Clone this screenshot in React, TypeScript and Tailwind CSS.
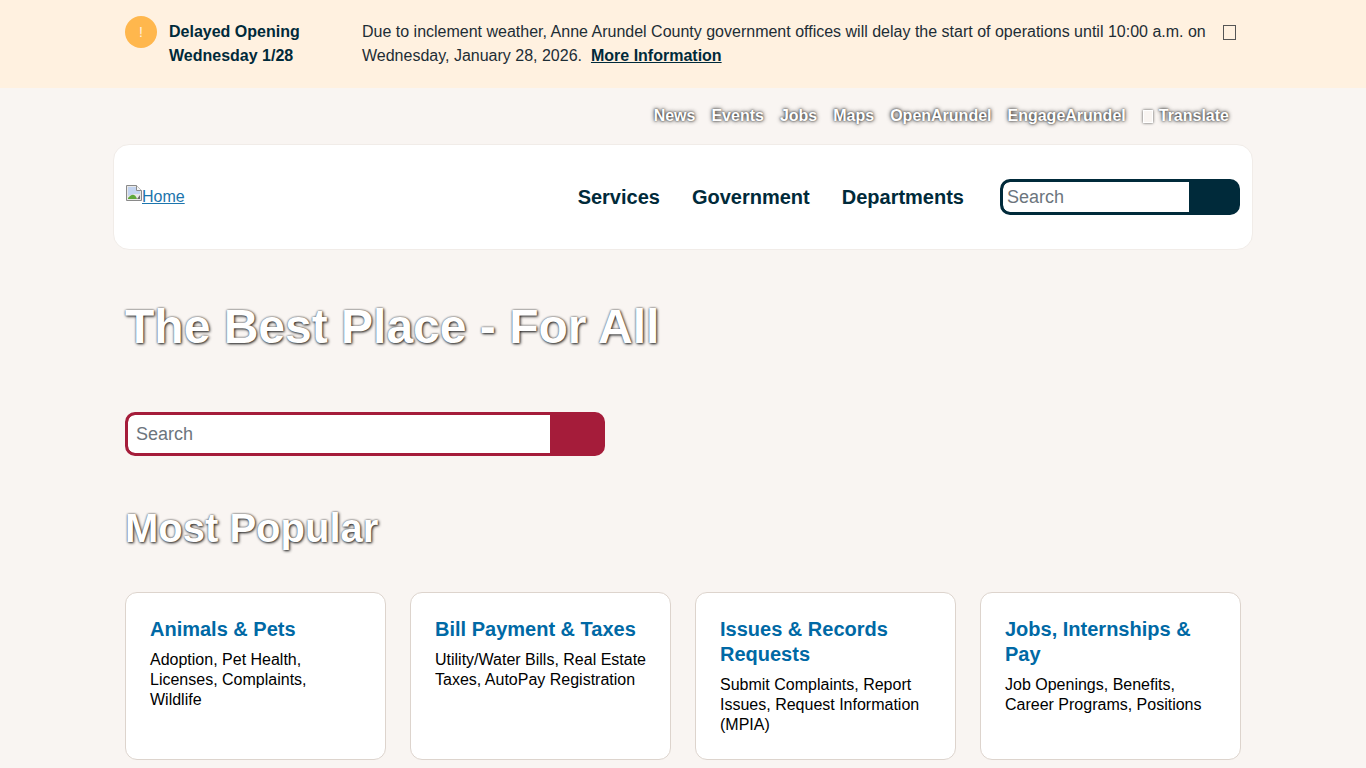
const topLinks = ["News", "Events", "Jobs", "Maps", "OpenArundel", "EngageArundel"];

const cards = [
  {
    title: "Animals & Pets",
    text: "Adoption, Pet Health, Licenses, Complaints, Wildlife",
  },
  {
    title: "Bill Payment & Taxes",
    text: "Utility/Water Bills, Real Estate Taxes, AutoPay Registration",
  },
  {
    title: "Issues & Records Requests",
    text: "Submit Complaints, Report Issues, Request Information (MPIA)",
  },
  {
    title: "Jobs, Internships & Pay",
    text: "Job Openings, Benefits, Career Programs, Positions",
  },
];

function BrokenImage() {
  return (
    <svg width="16" height="16" viewBox="0 0 16 16" className="mt-[1px] shrink-0">
      <path d="M0.5 0.5H10.5L15.5 5.5V15.5H0.5Z" fill="#e8e8e8" stroke="#8a8a8a" />
      <path d="M2 2H10V6H14V9L8 9L2 11Z" fill="#c3d4f0" />
      <path d="M2 14V13C5 9 9 8 11 14Z" fill="#5fa83a" />
      <path d="M11 14L14 10V14Z" fill="#6b6b6b" />
      <path d="M10.5 0.5V5.5H15.5" fill="#f5f5f5" stroke="#8a8a8a" />
    </svg>
  );
}

export default function App() {
  return (
    <div className="h-screen overflow-hidden bg-[#f9f5f2] font-['Liberation_Sans',Arial,sans-serif] text-base">
      {/* Alert */}
      <div className="h-[88px] bg-[#fff1e0]">
        <div className="mx-auto flex w-[1140px] px-3 pt-4">
          <div className="flex h-8 w-8 shrink-0 items-center justify-center rounded-full bg-[#ffb74d] text-sm text-[#fff1e0]">
            !
          </div>
          <div className="ml-3 w-[193px] shrink-0 pt-1 leading-6 font-bold text-[#002a3a]">
            Delayed Opening
            <br />
            Wednesday 1/28
          </div>
          <p className="w-[850px] shrink-0 pt-1 leading-6 text-[#1d2d35]">
            Due to inclement weather, Anne Arundel County government offices will delay the start of operations until 10:00 a.m. on Wednesday, January 28, 2026.{" "}
            <a href="#" className="ml-[4.5px] font-bold text-[#002a3a] underline">
              More Information
            </a>
          </p>
          <div className="mt-[9px] ml-[11px] h-[15px] w-[13px] border border-[#555]" />
        </div>
      </div>

      <div className="mx-auto w-[1140px]">
        {/* Top links */}
        <div className="flex h-[56px] items-center justify-end gap-4 pr-6 font-bold text-white [text-shadow:0_0_4px_#222,0_0_2px_#555]">
          {topLinks.map((link) => (
            <a key={link} href="#">
              {link}
            </a>
          ))}
          <span className="flex items-center gap-[6px] pl-[1px]">
            <span className="h-[13px] w-[10px] border border-white shadow-[0_0_3px_#444]" />
            Translate
          </span>
        </div>

        {/* Header */}
        <div className="flex h-[106px] items-center rounded-2xl border border-[#f1ece8] bg-white pr-3 pl-3">
          <a href="#" className="-mt-[2px] flex items-start leading-6 text-[#1c75ad] underline">
            <BrokenImage />
            <span className="pt-[1px]">Home</span>
          </a>
          <nav className="ml-auto flex gap-8 text-xl font-bold text-[#002a3a]">
            <a href="#">Services</a>
            <a href="#">Government</a>
            <a href="#">Departments</a>
          </nav>
          <div className="ml-9 flex h-9 w-[240px] overflow-hidden rounded-[10px] border-[3px] border-[#002a3a] bg-[#002a3a]">
            <input
              placeholder="Search"
              className="w-[186px] rounded-l-[7px] bg-white px-1 text-lg outline-none placeholder:text-[#6c757d]"
            />
          </div>
        </div>

        <div className="px-3">
          <h1 className="mt-[48px] text-5xl leading-[58px] font-bold text-white [text-shadow:1px_1px_3px_#222,0_0_2px_#555]">
            The Best Place - For All
          </h1>

          {/* Big search */}
          <div className="mt-[56px] flex h-11 w-[480px] overflow-hidden rounded-[10px] border-[3px] border-[#a51c3a] bg-[#a51c3a]">
            <input
              placeholder="Search"
              className="w-[422px] rounded-l-[7px] bg-white px-2 text-lg outline-none placeholder:text-[#6c757d]"
            />
          </div>

          <h2 className="mt-[48px] text-[40px] leading-[48px] font-bold text-white [text-shadow:1px_1px_3px_#222,0_0_2px_#555]">
            Most Popular
          </h2>

          {/* Cards */}
          <div className="mt-[40px] grid grid-cols-4 gap-6">
            {cards.map((card) => (
              <a key={card.title} href="#" className="block h-[168px] rounded-xl border border-[#ddd4cd] bg-white p-6">
                <h3 className="text-xl leading-[25px] font-bold text-[#0069a5]">{card.title}</h3>
                <p className="mt-2 leading-5 text-black">{card.text}</p>
              </a>
            ))}
          </div>
        </div>
      </div>
    </div>
  );
}
